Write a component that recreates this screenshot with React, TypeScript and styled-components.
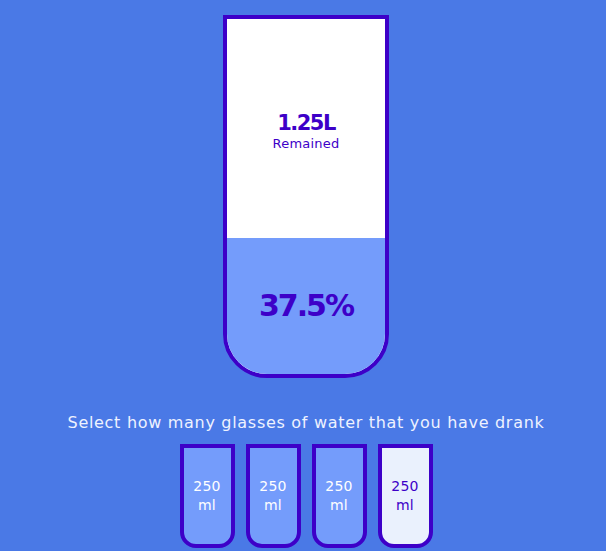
import React, { useState } from 'react';
import styled, { createGlobalStyle } from 'styled-components';

const GlobalStyle = createGlobalStyle`
  html, body {
    margin: 0;
    padding: 0;
    background-color: #4a79e6;
  }
  body {
    font-family: 'DejaVu Sans', 'Open Sans', sans-serif;
    color: #fff;
  }
`;

const Page = styled.div`
  display: flex;
  flex-direction: column;
  align-items: center;
  padding: 15px 0 0 6px;
  height: 551px;
  box-sizing: border-box;
`;

const Cup = styled.div`
  box-sizing: border-box;
  width: 166px;
  height: 363px;
  background-color: #fff;
  border: 4px solid #3d00c8;
  border-radius: 0 0 44px 44px;
  color: #3d00c8;
  display: flex;
  flex-direction: column;
  overflow: hidden;
`;

const Remained = styled.div`
  flex: 1;
  display: flex;
  flex-direction: column;
  align-items: center;
  justify-content: center;
  text-align: center;
  padding-top: 4px;

  span {
    font-size: 21px;
    font-weight: bold;
    line-height: 26px;
    letter-spacing: -1.5px;
  }
  small {
    font-size: 13px;
    line-height: 15px;
    letter-spacing: 0.2px;
  }
`;

const Percentage = styled.div`
  background-color: #749cfb;
  display: flex;
  align-items: center;
  justify-content: center;
  font-weight: bold;
  font-size: 30px;
  letter-spacing: -2px;
`;

const Text = styled.p`
  margin: 35px 0 11px;
  font-size: 16px;
  line-height: 20px;
  letter-spacing: 0.7px;
  color: #eef2ff;
  text-align: center;
`;

const Cups = styled.div`
  display: flex;
  justify-content: center;
  gap: 11px;
`;

const SmallCup = styled.div<{ $full: boolean }>`
  box-sizing: border-box;
  width: 55px;
  height: 104px;
  border: 4px solid #3d00c8;
  border-radius: 0 0 16px 16px;
  background-color: ${(p) => (p.$full ? '#749cfb' : '#eaf1fd')};
  color: ${(p) => (p.$full ? '#fff' : '#3d00c8')};
  display: flex;
  align-items: center;
  justify-content: center;
  text-align: center;
  font-size: 14px;
  line-height: 19px;
  letter-spacing: 0.3px;
  cursor: pointer;
`;

const TOTAL = 2000;
const SIZE = 250;

export default function App() {
  const [filled, setFilled] = useState(3);
  const cupCount = 4;
  const drunk = filled * SIZE;
  const pct = (drunk / TOTAL) * 100;
  const remained = (TOTAL - drunk) / 1000;
  const fillHeight = (pct / 100) * 363;

  return (
    <Page>
      <GlobalStyle />
      <Cup>
        <Remained>
          <span>{remained}L</span>
          <small>Remained</small>
        </Remained>
        <Percentage style={{ height: fillHeight }}>{pct}%</Percentage>
      </Cup>
      <Text>Select how many glasses of water that you have drank</Text>
      <Cups>
        {Array.from({ length: cupCount }).map((_, i) => (
          <SmallCup
            key={i}
            $full={i < filled}
            onClick={() => setFilled(i + 1 === filled ? i : i + 1)}
          >
            250
            <br />
            ml
          </SmallCup>
        ))}
      </Cups>
    </Page>
  );
}
